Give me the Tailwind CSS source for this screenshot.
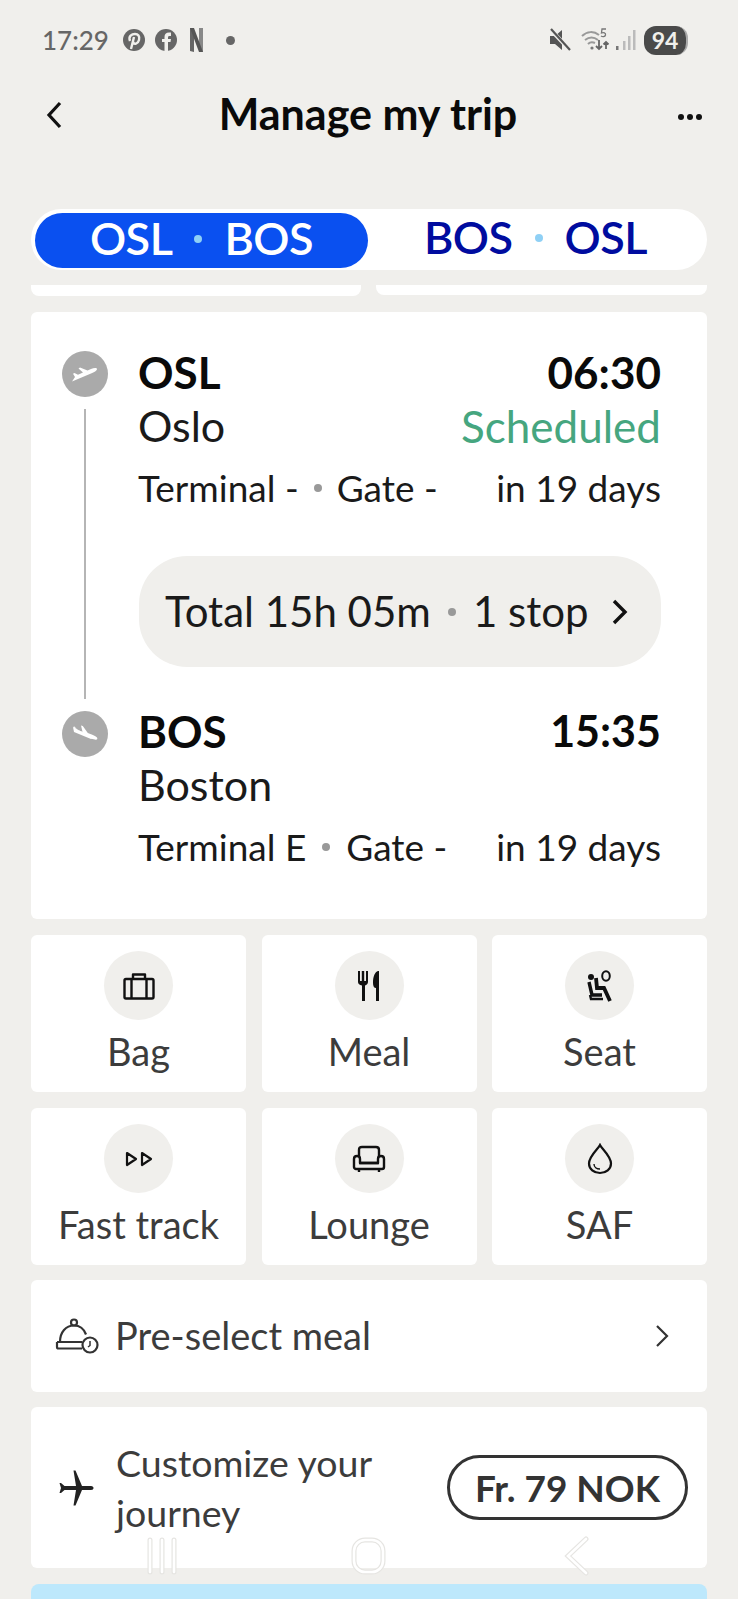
<!DOCTYPE html>
<html><head><meta charset="utf-8"><script src="https://cdn.jsdelivr.net/npm/@tailwindcss/browser@4"></script></head>
<body class="m-0">
<div class="relative w-[738px] h-[1599px] overflow-hidden bg-[#f0efec] font-['Lato',sans-serif] text-[#1a1a1a]">
  <div class="h-[80px] flex items-center pl-[42px] pr-[50px] text-[#666]">
    <span class="text-[26px] font-medium">17:29</span>
    <svg class="ml-[13px]" width="24" height="24" viewBox="0 0 24 24"><circle cx="12" cy="12" r="11" fill="#666"/><path d="M9 21l3-12M8 13c-2-5 2-7 5-7s5 2 4 6-5 5-6 2" fill="none" stroke="#f0efec" stroke-width="2.400"/></svg>
    <svg class="ml-[8px]" width="24" height="24" viewBox="0 0 24 24"><circle cx="12" cy="12" r="11" fill="#666"/><path d="M10.500 23v-9H8v-3h2.500V9c0-3 1.500-4.500 4.500-4.500h2V8h-1.500c-1 0-1.500.5-1.500 1.500V11h3l-.5 3H14v9z" fill="#f0efec"/></svg>
    <svg class="ml-[11px]" width="15" height="26" viewBox="0 0 15 26"><path d="M1 1h4v24l-4-1z" fill="#666"/><path d="M10 1h4v24l-4-1z" fill="#888"/><path d="M1 1h4l9 24h-4z" fill="#555"/></svg>
    <span class="ml-[22px] w-[9px] h-[9px] rounded-full bg-[#666]"></span>
    <div class="ml-auto flex items-center">
      <svg width="22" height="24" viewBox="0 0 22 24"><path d="M1 8h5l7-6v20l-7-6H1z" fill="#555"/><path d="M2 2l19 20" stroke="#f0efec" stroke-width="4"/><path d="M2 1l19 21" stroke="#555" stroke-width="2.200"/></svg>
      <svg class="ml-[10px]" width="30" height="26" viewBox="0 0 30 26" fill="none"><path d="M1 9c5-5 12-5 17-1M4 13c4-3 9-3 13 0M7 17c2-2 5-2 7-1" stroke="#999" stroke-width="2"/><circle cx="11" cy="21" r="1.600" fill="#777"/><path d="M18 13v9m-3-3l3 3 3-3M25 22v-7m-2.500 2.500L25 15l2.500 2.500" stroke="#666" stroke-width="1.800"/><path d="M25 2h-4l-.5 4c2-1 4.500 0 4 2s-3 2-4.500 1" stroke="#777" stroke-width="1.300"/></svg>
      <svg class="ml-[4px]" width="22" height="24" viewBox="0 0 22 24"><rect x="1" y="18" width="2.500" height="4" fill="#777"/><rect x="8" y="13" width="2.500" height="9" fill="#bbb"/><rect x="13" y="8" width="2.500" height="14" fill="#bbb"/><rect x="18" y="2" width="2.500" height="20" fill="#bbb"/></svg>
      <span class="ml-[7px] w-[44px] h-[29px] rounded-[12px] bg-[#4a4a4a] border-r-[2px] border-[#aaa] text-[#f0efec] text-[23px] font-bold leading-[29px] text-center">94</span>
    </div>
  </div>

  <div class="h-[70px] flex items-center justify-between pl-[44px] pr-[36px]">
    <svg width="20" height="30" viewBox="0 0 20 30" fill="none"><path d="M16 3L5 15l11 12" stroke="#111" stroke-width="3.200"/></svg>
    <h1 class="text-[43px] font-bold text-[#0a0a0a] leading-none mb-[3px] mr-[6px]">Manage my trip</h1>
    <div class="flex gap-[3px] mt-[4px]"><span class="w-[6px] h-[6px] rounded-full bg-[#111]"></span><span class="w-[6px] h-[6px] rounded-full bg-[#111]"></span><span class="w-[6px] h-[6px] rounded-full bg-[#111]"></span></div>
  </div>

  <div class="mx-[31px] mt-[59px] h-[61px] rounded-full bg-white flex items-center pl-[4px] pr-[4px] text-[45px] font-semibold tracking-[-0.5px]">
    <div class="w-[333px] h-[55px] mt-[1px] rounded-full bg-[#0a50f0] text-white flex items-center justify-center gap-[22px] pb-[3px]"><span>OSL</span><span class="w-[8px] h-[8px] rounded-full bg-[#8fd0f5]"></span><span>BOS</span></div>
    <div class="flex-1 h-[55px] text-[#000c9f] flex items-center justify-center gap-[22px] pb-[3px]"><span>BOS</span><span class="w-[8px] h-[8px] rounded-full bg-[#8fd0f5]"></span><span>OSL</span></div>
  </div>
  <div class="mx-[31px] mt-[15px] h-[11px] flex gap-[15px]"><div class="w-[330px] h-[11px] bg-white rounded-b-[8px]"></div><div class="flex-1 h-[10px] bg-white rounded-b-[8px]"></div></div>

  <div class="mx-[31px] mt-[16px] h-[607px] bg-white rounded-[6px] flex pl-[31px] pr-[46px] pt-[34px]">
    <div class="w-[46px] shrink-0 flex flex-col items-center pt-[5px]">
      <div class="w-[46px] h-[46px] rounded-full bg-[#aaaaaa] flex items-center justify-center">
        <svg width="28" height="18" viewBox="0 0 28 18"><path d="M1 16.500l19-8c3-1.300 6-2.800 6-4.300S23 2.800 20 4l-3.500 1.500L9 2.500 7.500 3.500 12 7.500l-5 2.200L3.500 8 2 8.800l2 3.200z" fill="#fff"/></svg>
      </div>
      <div class="w-[2px] h-[290px] bg-[#b5b5b5] mt-[12px]"></div>
      <div class="w-[46px] h-[46px] rounded-full bg-[#aaaaaa] mt-[12px] flex items-center justify-center">
        <svg width="28" height="18" viewBox="0 0 28 18"><path d="M2 2l1.500-.5 3 3.500 5 1.800L10 .5l1.800.5 5 7 4.500 1.800c3 1.200 5.500 2.800 5 4.200s-3.500.6-6-.4z" fill="#fff"/><path d="M2 2l1 5 17 7 2-1z" fill="#fff"/></svg>
      </div>
    </div>
    <div class="flex-1 pl-[30px]">
      <div class="h-[54px] pb-[3px] flex items-center justify-between text-[44px] font-bold text-[#0a0a0a]"><span>OSL</span><span>06:30</span></div>
      <div class="h-[54px] pb-[2px] flex items-center justify-between text-[43px]"><span>Oslo</span><span class="text-[44px] text-[#46a67f]">Scheduled</span></div>
      <div class="h-[68px] flex items-center text-[37px]"><span>Terminal -</span><span class="w-[8px] h-[8px] rounded-full bg-[#999] mx-[15px]"></span><span>Gate -</span><span class="ml-auto">in 19 days</span></div>
      <div class="ml-[1px] mt-[34px] h-[111px] rounded-[48px] bg-[#f0efec] flex items-center pl-[26px] pr-[32px] text-[42px]"><span>Total 15h 05m</span><span class="w-[8px] h-[8px] rounded-full bg-[#999] mx-[17px]"></span><span>1 stop</span>
        <svg class="ml-auto" width="18" height="28" viewBox="0 0 18 28" fill="none"><path d="M3 3l11 11L3 25" stroke="#111" stroke-width="3.400"/></svg></div>
      <div class="mt-[38px] h-[54px] pb-[2px] flex items-center justify-between text-[44px] font-bold text-[#0a0a0a]"><span>BOS</span><span class="text-[43px]">15:35</span></div>
      <div class="h-[54px] pb-[2px] flex items-center text-[43px]"><span>Boston</span></div>
      <div class="h-[68px] flex items-center text-[37px]"><span>Terminal E</span><span class="w-[8px] h-[8px] rounded-full bg-[#999] mx-[16px]"></span><span>Gate -</span><span class="ml-auto">in 19 days</span></div>
    </div>
  </div>

  <div class="mx-[31px] mt-[16px] grid grid-cols-3 gap-x-[15.500px] gap-y-[16px] text-[38px] text-[#3c3c3c]">
    <div class="h-[157px] bg-white rounded-[6px] flex flex-col items-center pt-[16px]"><div class="w-[69px] h-[69px] rounded-full bg-[#f0efec] flex items-center justify-center"><svg width="32" height="28" viewBox="0 0 32 28" fill="none" stroke="#111" stroke-width="2.400" stroke-linejoin="round"><rect x="1.500" y="7" width="29" height="19.500" rx="1.500"/><path d="M10 7V2.500h12V7M8.500 7v19.500M23.500 7v19.500"/></svg></div><span class="mt-[6px] leading-[50px]">Bag</span></div>
    <div class="h-[157px] bg-white rounded-[6px] flex flex-col items-center pt-[16px]"><div class="w-[69px] h-[69px] rounded-full bg-[#f0efec] flex items-center justify-center"><svg width="24" height="32" viewBox="0 0 24 32" fill="#111"><path d="M1 1h2v10h1.800V1h2.400v10H9V1h2v11c0 2-1.500 3-3 3.500V31H5V15.500C2.500 15 1 14 1 12z"/><path d="M21 1c-3 1-5 5-5 12 0 3 1 5 3 5v13h3V1z"/></svg></div><span class="mt-[6px] leading-[50px]">Meal</span></div>
    <div class="h-[157px] bg-white rounded-[6px] flex flex-col items-center pt-[16px]"><div class="w-[69px] h-[69px] rounded-full bg-[#f0efec] flex items-center justify-center"><svg width="28" height="32" viewBox="0 0 28 32" fill="none" stroke="#111"><circle cx="5" cy="7" r="3" fill="#111" stroke="none"/><path d="M3 12l3 13h10" stroke-width="3.400"/><path d="M10 8l1 10h7l6 13" stroke-width="3.800"/><ellipse cx="20" cy="6" rx="3.800" ry="4.800" stroke-width="2"/><path d="M4 25l1 4h12" stroke-width="2.400"/></svg></div><span class="mt-[6px] leading-[50px]">Seat</span></div>
    <div class="h-[157px] bg-white rounded-[6px] flex flex-col items-center pt-[16px]"><div class="w-[69px] h-[69px] rounded-full bg-[#f0efec] flex items-center justify-center"><svg width="28" height="16" viewBox="0 0 28 16" fill="none" stroke="#111" stroke-width="2.200" stroke-linejoin="round"><path d="M2 2l9 6-9 6zM17 2l9 6-9 6z"/></svg></div><span class="mt-[6px] leading-[50px]">Fast track</span></div>
    <div class="h-[157px] bg-white rounded-[6px] flex flex-col items-center pt-[16px]"><div class="w-[69px] h-[69px] rounded-full bg-[#f0efec] flex items-center justify-center"><svg width="34" height="28" viewBox="0 0 34 28" fill="none" stroke="#111" stroke-width="2.400" stroke-linejoin="round"><path d="M7 12V5c0-2 1-3 3-3h14c2 0 3 1 3 3v7M7 18h20"/><path d="M2 14c0-2 1-3 3-3s3 1 3 3v4h18v-4c0-2 1-3 3-3s3 1 3 3v8c0 1-1 2-2 2H4c-1 0-2-1-2-2zM7 24v3M27 24v3"/></svg></div><span class="mt-[6px] leading-[50px]">Lounge</span></div>
    <div class="h-[157px] bg-white rounded-[6px] flex flex-col items-center pt-[16px]"><div class="w-[69px] h-[69px] rounded-full bg-[#f0efec] flex items-center justify-center"><svg width="26" height="32" viewBox="0 0 26 32" fill="none" stroke="#111" stroke-width="2.200"><path d="M13 2c2 4 11 11 11 18.500 0 5.500-5 9.500-11 9.500S2 26 2 20.500C2 13 11 6 13 2z"/><path d="M7 21c0 3 2.500 5 6 5" stroke-width="1.400"/></svg></div><span class="mt-[6px] leading-[50px]">SAF</span></div>
  </div>

  <div class="mx-[31px] mt-[15px] h-[112px] bg-white rounded-[6px] flex items-center pl-[24px] pr-[38px] text-[38px] text-[#3c3c3c]">
    <svg width="44" height="37" viewBox="0 0 44 37" fill="none" stroke="#333" stroke-width="2.200" stroke-linejoin="round"><circle cx="19" cy="4.500" r="3"/><path d="M5 24c0-10 6-16.500 14-16.500 6 0 10 3.500 12 9"/><path d="M2 24h25v0M2 24v5c0 1 .8 1.500 1.500 1.500H27"/><circle cx="35" cy="27" r="7.500" fill="#fff"/><path d="M35 23v4.500l-2 1.500" stroke-width="1.500"/></svg>
    <span class="ml-[16px] pb-[2px]">Pre-select meal</span>
    <svg class="ml-auto" width="14" height="24" viewBox="0 0 14 24" fill="none"><path d="M2 2l10 10L2 22" stroke="#333" stroke-width="2.200"/></svg>
  </div>

  <div class="mx-[31px] mt-[15px] h-[161px] bg-white rounded-[6px] flex items-center pl-[27px] pr-[19px]">
    <svg width="36" height="36" viewBox="0 0 36 36"><path d="M15.500 0.500h2L24 16h9c1.800 0 2.500 1 2.500 2s-.7 2-2.500 2h-9L17.500 35.500h-2L18 20H6.500L3 23H1.500L3 18 1.500 13H3l3.500 3H18z" fill="#222"/></svg>
    <span class="ml-[22px] w-[270px] text-[37.500px] leading-[50px] text-[#3c3c3c]">Customize your journey</span>
    <span class="ml-auto w-[241px] h-[65px] rounded-full border-[3px] border-[#333] flex items-center justify-center text-[37px] font-bold text-[#333]">Fr. 79 NOK</span>
  </div>

  <div class="mx-[31px] mt-[16px] h-[30px] bg-[#bde8fc] rounded-t-[8px]"></div>

  <div class="absolute left-0 top-[1536px] w-full h-[40px]">
    <svg class="absolute left-[146px] top-0" width="33" height="40" viewBox="0 0 33 40" fill="none" stroke-linecap="round"><path d="M4 4v32M16 4v32M28 4v32" stroke="#e6e5e2" stroke-width="5"/><path d="M4 4v32M16 4v32M28 4v32" stroke="#fff" stroke-width="2.600"/></svg>
    <svg class="absolute left-[351px] top-0" width="35" height="40" viewBox="0 0 35 40" fill="none"><rect x="3" y="4" width="29" height="32" rx="11" stroke="#e6e5e2" stroke-width="5"/><rect x="3" y="4" width="29" height="32" rx="11" stroke="#fff" stroke-width="2.600"/></svg>
    <svg class="absolute left-[563px] top-0" width="27" height="40" viewBox="0 0 27 40" fill="none" stroke-linecap="round"><path d="M23 3L5 20l18 17" stroke="#e6e5e2" stroke-width="5"/><path d="M23 3L5 20l18 17" stroke="#fff" stroke-width="2.600"/></svg>
  </div>
</div>
</body></html>
